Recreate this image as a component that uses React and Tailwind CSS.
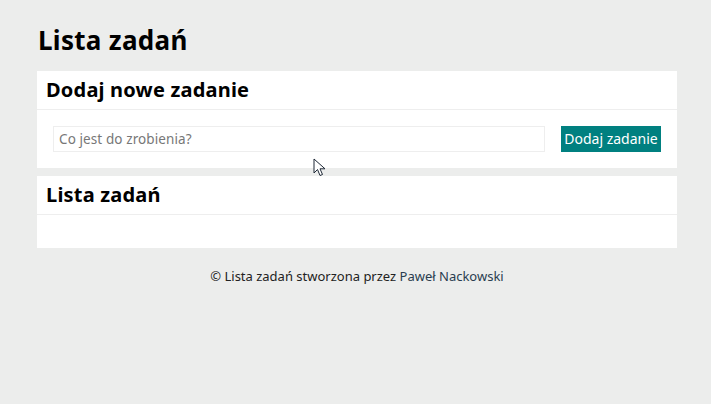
export default function App() {
  return (
    <div
      className="min-h-[404px] w-full bg-[#ecedec] text-black"
      style={{ fontFamily: '"Noto Sans", "Open Sans", sans-serif' }}
    >
      <div className="relative ml-[37px] w-[640px] pt-[24px]">
        <h1 className="text-[26px] font-bold leading-[32px] tracking-[0.3px] ml-[1px] mb-[15px]">Lista zadań</h1>

        <section className="bg-white">
          <h2 className="px-[9px] h-[39px] flex items-center text-[20px] font-bold tracking-[0.2px] border-b border-[#eeeeee]">
            Dodaj nowe zadanie
          </h2>
          <form className="flex items-center gap-[16px] p-[16px]" onSubmit={(e) => e.preventDefault()}>
            <input
              type="text"
              placeholder="Co jest do zrobienia?"
              className="flex-1 h-[26px] border border-[#eeeeee] px-[5px] text-[13.5px] tracking-[0.1px] placeholder:text-[#777] outline-none"
            />
            <button
              type="submit"
              className="h-[26px] w-[100px] bg-[#008080] text-white text-[14px] leading-none"
            >
              Dodaj zadanie
            </button>
          </form>
        </section>

        <section className="bg-white mt-[8px]">
          <h2 className="px-[9px] h-[39px] flex items-center text-[20px] font-bold tracking-[0.2px] border-b border-[#eeeeee]">
            Lista zadań
          </h2>
          <ul className="h-[33px]"></ul>
        </section>

        <footer className="mt-[19px] text-center text-[13px] text-[#222]">
          © Lista zadań stworzona przez{" "}
          <a href="#" className="text-[#2a3d50]">Paweł Nackowski</a>
        </footer>

        <svg
          className="absolute left-[276px] top-[158px]"
          width="14"
          height="20"
          viewBox="0 0 14 20"
        >
          <path
            d="M1 1 L1 15 L4.5 11.5 L7 17.5 L9.5 16.5 L7 10.8 L12 10.8 Z"
            fill="white"
            stroke="#1f2937"
            strokeWidth="1"
            strokeLinejoin="round"
          />
        </svg>
      </div>
    </div>
  );
}
